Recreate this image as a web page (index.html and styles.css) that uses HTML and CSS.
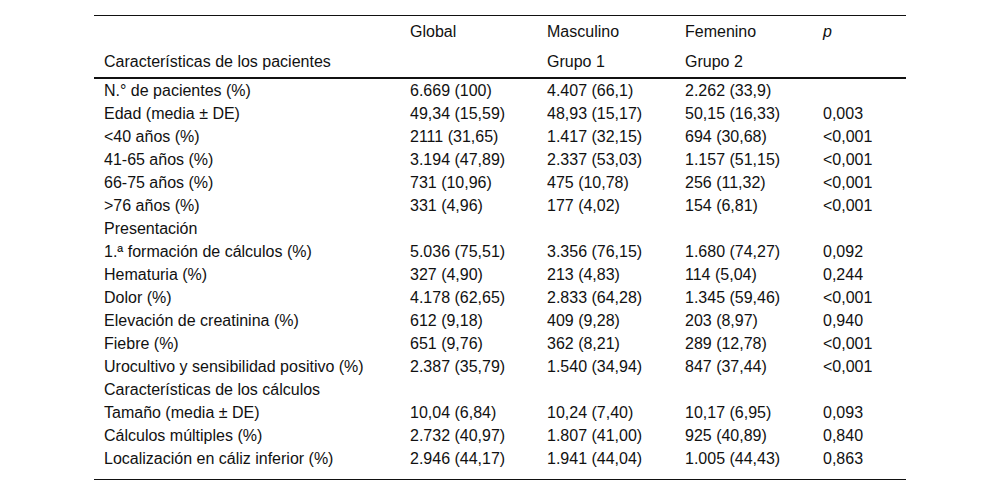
FILE: index.html
```html
<!DOCTYPE html>
<html lang="es">
<head>
<meta charset="utf-8">
<link rel="stylesheet" href="styles.css">
</head>
<body>
<div class="wrap">
<table class="tbl">
<colgroup>
<col class="c1"><col class="c2"><col class="c3"><col class="c4"><col class="c5">
</colgroup>
<thead>
<tr class="h1"><th></th><th>Global</th><th>Masculino</th><th>Femenino</th><th><i>p</i></th></tr>
<tr class="h2"><th>Características de los pacientes</th><th></th><th>Grupo 1</th><th>Grupo 2</th><th></th></tr>
</thead>
<tbody>
<tr><td>N.° de pacientes (%)</td><td>6.669 (100)</td><td>4.407 (66,1)</td><td>2.262 (33,9)</td><td></td></tr>
<tr><td>Edad (media ± DE)</td><td>49,34 (15,59)</td><td>48,93 (15,17)</td><td>50,15 (16,33)</td><td>0,003</td></tr>
<tr><td>&lt;40 años (%)</td><td>2111 (31,65)</td><td>1.417 (32,15)</td><td>694 (30,68)</td><td>&lt;0,001</td></tr>
<tr><td>41-65 años (%)</td><td>3.194 (47,89)</td><td>2.337 (53,03)</td><td>1.157 (51,15)</td><td>&lt;0,001</td></tr>
<tr><td>66-75 años (%)</td><td>731 (10,96)</td><td>475 (10,78)</td><td>256 (11,32)</td><td>&lt;0,001</td></tr>
<tr><td>&gt;76 años (%)</td><td>331 (4,96)</td><td>177 (4,02)</td><td>154 (6,81)</td><td>&lt;0,001</td></tr>
<tr><td>Presentación</td><td></td><td></td><td></td><td></td></tr>
<tr><td>1.ª formación de cálculos (%)</td><td>5.036 (75,51)</td><td>3.356 (76,15)</td><td>1.680 (74,27)</td><td>0,092</td></tr>
<tr><td>Hematuria (%)</td><td>327 (4,90)</td><td>213 (4,83)</td><td>114 (5,04)</td><td>0,244</td></tr>
<tr><td>Dolor (%)</td><td>4.178 (62,65)</td><td>2.833 (64,28)</td><td>1.345 (59,46)</td><td>&lt;0,001</td></tr>
<tr><td>Elevación de creatinina (%)</td><td>612 (9,18)</td><td>409 (9,28)</td><td>203 (8,97)</td><td>0,940</td></tr>
<tr><td>Fiebre (%)</td><td>651 (9,76)</td><td>362 (8,21)</td><td>289 (12,78)</td><td>&lt;0,001</td></tr>
<tr><td>Urocultivo y sensibilidad positivo (%)</td><td>2.387 (35,79)</td><td>1.540 (34,94)</td><td>847 (37,44)</td><td>&lt;0,001</td></tr>
<tr><td>Características de los cálculos</td><td></td><td></td><td></td><td></td></tr>
<tr><td>Tamaño (media ± DE)</td><td>10,04 (6,84)</td><td>10,24 (7,40)</td><td>10,17 (6,95)</td><td>0,093</td></tr>
<tr><td>Cálculos múltiples (%)</td><td>2.732 (40,97)</td><td>1.807 (41,00)</td><td>925 (40,89)</td><td>0,840</td></tr>
<tr class="last"><td>Localización en cáliz inferior (%)</td><td>2.946 (44,17)</td><td>1.941 (44,04)</td><td>1.005 (44,43)</td><td>0,863</td></tr>
</tbody>
</table>
</div>
</body>
</html>
```
FILE: styles.css
```css
html, body {
  margin: 0;
  padding: 0;
  background: #fff;
}
.wrap {
  display: flex;
  justify-content: center;
  padding-top: 15px;
}
.tbl {
  width: 812px;
  border-collapse: collapse;
  table-layout: fixed;
  font-family: "Liberation Sans", Arial, sans-serif;
  font-size: 16px;
  color: #111;
  border-top: 1px solid #111;
  border-bottom: 1px solid #111;
}
.c1 { width: 306px; }
.c2 { width: 137px; }
.c3 { width: 138px; }
.c4 { width: 138px; }
.c5 { width: 93px; }
.tbl th {
  font-weight: normal;
  text-align: left;
  padding: 0 10px;
  height: 31px;
  line-height: 18px;
}
.tbl th i { font-style: italic; }
.tbl thead .h2 th {
  border-bottom: 2px solid #111;
  height: 30px;
}
.tbl td {
  padding: 0 10px;
  height: 23px;
  line-height: 18px;
  white-space: nowrap;
}
.tbl tr.last td {
  height: 29px;
  vertical-align: top;
  padding-top: 3px;
}
```
